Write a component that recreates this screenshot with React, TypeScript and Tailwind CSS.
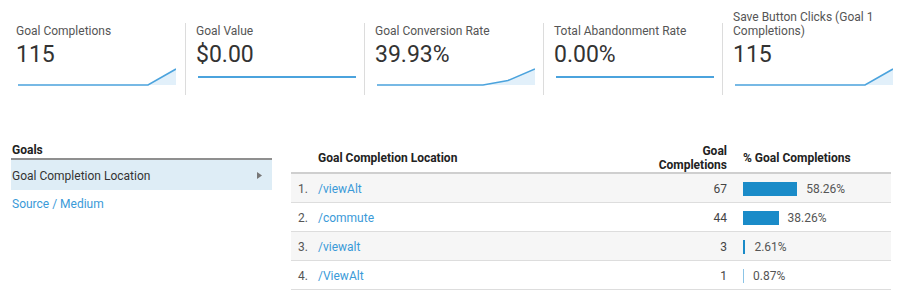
import React from "react";

type Card = {
  label: string;
  value: string;
  first?: boolean;
  last?: boolean;
  chart: "rise" | "flatmid" | "rise2";
};

const cards: Card[] = [
  { label: "Goal Completions", value: "115", first: true, chart: "rise" },
  { label: "Goal Value", value: "$0.00", chart: "flatmid" },
  { label: "Goal Conversion Rate", value: "39.93%", chart: "rise2" },
  { label: "Total Abandonment Rate", value: "0.00%", chart: "flatmid" },
  { label: "Save Button Clicks (Goal 1 Completions)", value: "115", last: true, chart: "rise" },
];

function Spark({ kind }: { kind: Card["chart"] }) {
  const stroke = "#4ba3dd";
  const fill = "#e2f0fa";
  if (kind === "flatmid") {
    return (
      <svg width="158" height="22" viewBox="0 0 158 22">
        <line x1="0" y1="10" x2="158" y2="10" stroke={stroke} strokeWidth="2" />
      </svg>
    );
  }
  if (kind === "rise") {
    return (
      <svg width="158" height="22" viewBox="0 0 158 22">
        <polygon points="130,18 158,2 158,18" fill={fill} />
        <polyline points="0,18 130,18 158,2" fill="none" stroke={stroke} strokeWidth="1.6" />
      </svg>
    );
  }
  return (
    <svg width="158" height="22" viewBox="0 0 158 22">
      <polygon points="106,18 131,13.5 158,2 158,18" fill={fill} />
      <polyline points="0,18 106,18 131,13.5 158,2" fill="none" stroke={stroke} strokeWidth="1.6" />
    </svg>
  );
}

const rows = [
  { n: "1.", name: "/viewAlt", count: "67", pct: 58.26, pctText: "58.26%", bg: "bg-[#f6f6f6]" },
  { n: "2.", name: "/commute", count: "44", pct: 38.26, pctText: "38.26%", bg: "bg-white" },
  { n: "3.", name: "/viewalt", count: "3", pct: 2.61, pctText: "2.61%", bg: "bg-[#f6f6f6]" },
  { n: "4.", name: "/ViewAlt", count: "1", pct: 0.87, pctText: "0.87%", bg: "bg-white" },
];

export default function App() {
  return (
    <div
      className="w-[919px] h-[300px] bg-white overflow-hidden text-[#333]"
      style={{ fontFamily: "Roboto, 'Liberation Sans', sans-serif" }}
    >
      {/* Metric cards */}
      <div className="flex pt-[23px]">
        {cards.map((c, i) => (
          <div
            key={i}
            className={`h-[72px] flex flex-col ${c.first ? "w-[186px] pl-[16px]" : "w-[179px] pl-[10px]"} ${
              c.last ? "" : "border-r border-[#dcdcdc]"
            }`}
          >
            <div className="h-[14px] mt-[1px] flex flex-col justify-end">
              <div className="text-[12px] leading-[14px] text-[#555] pr-[10px]">{c.label}</div>
            </div>
            <div className="mt-[5px] text-[23px] leading-[24px] text-[#333]">{c.value}</div>
            <div className="ml-[2px]">
              <Spark kind={c.chart} />
            </div>
          </div>
        ))}
      </div>

      {/* Bottom section */}
      <div className="flex mt-[48px]">
        {/* Left panel */}
        <div className="ml-[11px] w-[261px]">
          <div className="h-[15px] leading-[15px] text-[12px] font-bold text-[#222] pl-[1px] border-b-[2px] border-[#8f8f8f] box-content">
            Goals
          </div>
          <div className="h-[30px] pt-[1px] bg-[#deedf6] flex items-center justify-between pl-[1px] pr-[10px]">
            <span className="text-[12px] text-[#333]">Goal Completion Location</span>
            <svg width="5" height="7" viewBox="0 0 5 7">
              <polygon points="0,0 5,3.5 0,7" fill="#777" />
            </svg>
          </div>
          <div className="h-[28px] flex items-center pl-[1px] text-[12px] text-[#3a9ad8]">Source / Medium</div>
        </div>

        {/* Table */}
        <div className="ml-[19px] w-[600px]">
          <div className="h-[29px] flex items-center border-b-[2px] border-[#cfcfcf] box-content text-[12px] font-bold text-[#222]">
            <div className="pl-[27px] flex-1">Goal Completion Location</div>
            <div className="w-[120px] text-right leading-[14px]">
              Goal
              <br />
              Completions
            </div>
            <div className="w-[164px] pl-[16px]">% Goal Completions</div>
          </div>
          {rows.map((r, i) => (
            <div
              key={i}
              className={`h-[27px] pt-[1px] flex items-center border-b border-[#dddddd] box-content text-[12px] ${r.bg}`}
            >
              <div className="w-[27px] pl-[7px] text-[#555]">{r.n}</div>
              <div className="flex-1 text-[#3a9ad8]">{r.name}</div>
              <div className="w-[120px] text-right text-[#444]">{r.count}</div>
              <div className="w-[164px] pl-[16px] flex items-center">
                <div
                  className={`h-[14px] ${i === 3 ? "bg-[#8cc4e6]" : "bg-[#1a8bc8]"}`}
                  style={{ width: `${Math.max(1, Math.round(r.pct * 0.93 * 10) / 10)}px` }}
                />
                <span className="ml-[9px] text-[#555]">{r.pctText}</span>
              </div>
            </div>
          ))}
        </div>
      </div>
    </div>
  );
}
